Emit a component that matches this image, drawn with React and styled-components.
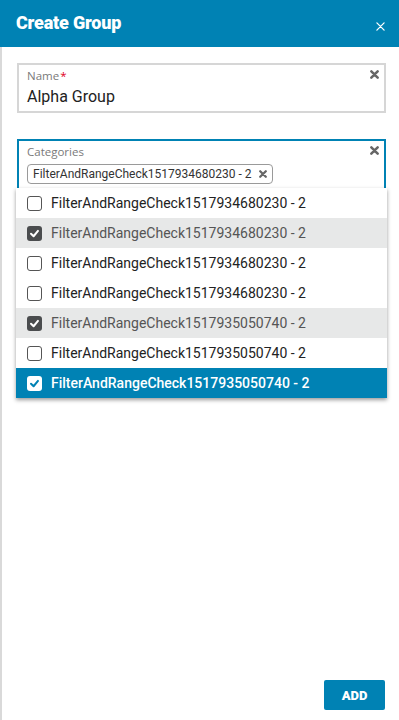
import styled, { createGlobalStyle } from "styled-components";

const GlobalStyle = createGlobalStyle`
  html, body {
    margin: 0;
    padding: 0;
    background: #fff;
  }
  body {
    font-family: Roboto, "Liberation Sans", sans-serif;
  }
`;

const options = [
  { label: "FilterAndRangeCheck1517934680230 - 2", checked: false },
  { label: "FilterAndRangeCheck1517934680230 - 2", checked: true },
  { label: "FilterAndRangeCheck1517934680230 - 2", checked: false },
  { label: "FilterAndRangeCheck1517934680230 - 2", checked: false },
  { label: "FilterAndRangeCheck1517935050740 - 2", checked: true },
  { label: "FilterAndRangeCheck1517935050740 - 2", checked: false },
  { label: "FilterAndRangeCheck1517935050740 - 2", checked: true, active: true },
];

const ClearIcon = ({ size = 9, color = "#666" }) => (
  <svg width={size} height={size} viewBox="0 0 10 10">
    <path
      d="M1.5 1.5 L8.5 8.5 M8.5 1.5 L1.5 8.5"
      stroke={color}
      strokeWidth="2.8"
      strokeLinecap="round"
    />
  </svg>
);

const CheckMark = ({ color }) => (
  <svg width="11" height="11" viewBox="0 0 12 12">
    <path
      d="M2.2 6.3 L5 9 L9.8 3.2"
      fill="none"
      stroke={color}
      strokeWidth="2.2"
      strokeLinecap="round"
      strokeLinejoin="round"
    />
  </svg>
);

function App() {
  return (
    <>
      <GlobalStyle />
      <Page>
        <Header>
          <Title>Create Group</Title>
          <CloseButton>
            <svg width="9" height="9" viewBox="0 0 10 10">
              <path
                d="M1 1 L9 9 M9 1 L1 9"
                stroke="#fff"
                strokeWidth="1.4"
                strokeLinecap="round"
              />
            </svg>
          </CloseButton>
        </Header>
        <Content>
          <Field>
            <FieldLabel>
              Name<Required>*</Required>
            </FieldLabel>
            <FieldValue>Alpha Group</FieldValue>
            <ClearButton>
              <ClearIcon />
            </ClearButton>
          </Field>

          <SelectWrap>
            <Field $focused>
              <FieldLabel>Categories</FieldLabel>
              <Chips>
                <Chip>
                  FilterAndRangeCheck1517934680230 - 2
                  <ClearIcon size={8} />
                </Chip>
                {/* second chip sits under the open menu */}
                <Chip $hidden />
              </Chips>
              <ClearButton>
                <ClearIcon />
              </ClearButton>
            </Field>
            <Dropdown>
              {options.map((opt, index) => (
                <Option
                  key={index}
                  $checked={opt.checked}
                  $active={opt.active}
                >
                  <Checkbox $checked={opt.checked} $active={opt.active}>
                    {opt.checked && (
                      <CheckMark color={opt.active ? "#0082b4" : "#fff"} />
                    )}
                  </Checkbox>
                  {opt.label}
                </Option>
              ))}
            </Dropdown>
          </SelectWrap>
        </Content>
        <Footer>
          <AddButton>ADD</AddButton>
        </Footer>
      </Page>
    </>
  );
}

const Page = styled.div`
  display: flex;
  flex-direction: column;
  min-height: 720px;
  box-sizing: border-box;
`;

const Header = styled.header`
  height: 47px;
  background: #0082b4;
  display: flex;
  align-items: center;
  justify-content: space-between;
  padding: 0 14px 0 16px;
  box-sizing: border-box;
`;

const Title = styled.h1`
  margin: 0;
  margin-top: -3px;
  color: #fff;
  font-family: Roboto, "Liberation Sans", sans-serif;
  font-size: 18px;
  font-weight: 900;
  letter-spacing: -0.2px;
`;

const CloseButton = styled.span`
  display: flex;
  margin-top: 5px;
`;

const Content = styled.main`
  flex: 1;
  display: flex;
  flex-direction: column;
  gap: 26px;
  padding: 16px 13px 0 15px;
  border-left: 2px solid #d9d9d9;
`;

const Field = styled.div`
  position: relative;
  border: 2px solid ${(p) => (p.$focused ? "#0082b4" : "#d6d6d6")};
  padding: 4px 30px 4px 8px;
  display: flex;
  flex-direction: column;
`;

const FieldLabel = styled.div`
  font-family: "Open Sans", "Liberation Sans", sans-serif;
  font-size: 11.5px;
  line-height: 14px;
  color: #7a7a7a;
`;

const Required = styled.span`
  color: #e0001b;
  margin-left: 1px;
`;

const FieldValue = styled.div`
  margin-top: 3px;
  font-size: 16px;
  line-height: 21px;
  color: #222;
`;

const ClearButton = styled.span`
  position: absolute;
  top: 5px;
  right: 5px;
  display: flex;
`;

const SelectWrap = styled.div`
  position: relative;
`;

const Chips = styled.div`
  display: flex;
  flex-direction: column;
  align-items: flex-start;
  gap: 4px;
  margin-top: 5px;
`;

const Chip = styled.span`
  display: inline-flex;
  align-items: center;
  gap: 7px;
  height: 20px;
  width: ${(p) => (p.$hidden ? "244px" : "auto")};
  box-sizing: border-box;
  padding: 0 5px 0 5px;
  border: 1px solid #9a9a9a;
  border-radius: 4px;
  font-size: 12px;
  color: #333;
`;

const Dropdown = styled.ul`
  position: absolute;
  top: 49px;
  left: -1px;
  right: -1px;
  margin: 0;
  padding: 0;
  list-style: none;
  background: #fff;
  box-shadow: 0 2px 4px rgba(0, 0, 0, 0.4);
  z-index: 2;
`;

const Option = styled.li`
  height: 30px;
  display: flex;
  align-items: center;
  gap: 9px;
  padding-left: 11px;
  font-size: 14px;
  background: ${(p) => (p.$active ? "#0082b4" : p.$checked ? "#e7e8e8" : "#fff")};
  color: ${(p) => (p.$active ? "#fff" : p.$checked ? "#555" : "#222")};
  font-weight: ${(p) => (p.$active ? 500 : 400)};
`;

const Checkbox = styled.span`
  width: 15px;
  height: 15px;
  box-sizing: border-box;
  border-radius: 3px;
  display: flex;
  align-items: center;
  justify-content: center;
  border: ${(p) => (p.$checked ? "none" : "1.5px solid #555")};
  background: ${(p) =>
    p.$active ? "#fff" : p.$checked ? "#4a4c4e" : "#fff"};
`;

const Footer = styled.footer`
  display: flex;
  justify-content: flex-end;
  padding: 0 14px 10px 0;
  border-left: 2px solid #d9d9d9;
`;

const AddButton = styled.button`
  width: 61px;
  height: 30px;
  border: none;
  border-radius: 2px;
  background: #0082b4;
  color: #fff;
  font-family: Roboto, "Liberation Sans", sans-serif;
  font-size: 13px;
  font-weight: 900;
  padding: 0;
`;

export default App;
